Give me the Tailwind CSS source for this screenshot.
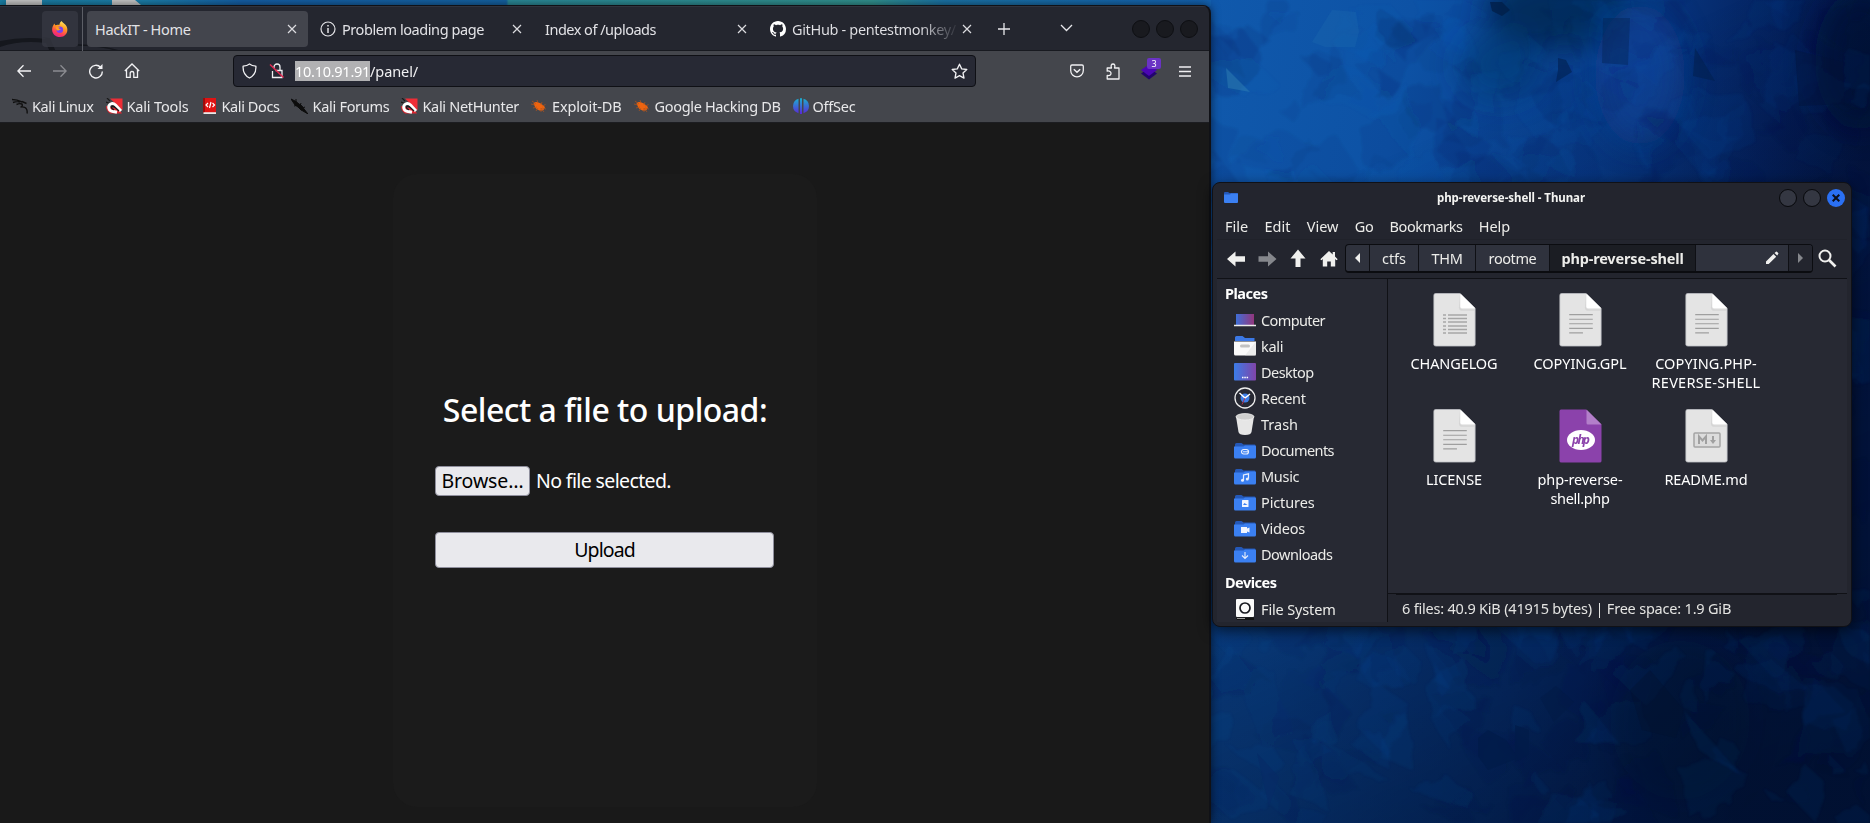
<!DOCTYPE html>
<html lang="en">
<head>
<meta charset="utf-8">
<title>Desktop</title>
<script src="https://cdn.jsdelivr.net/npm/@tailwindcss/browser@4"></script>
</head>
<body class="w-[1870px] h-[823px] overflow-hidden relative bg-[#06306f] font-['Noto_Sans',sans-serif] text-[14.5px] leading-5 whitespace-nowrap">

<!-- symbols shared by several places -->
<svg class="absolute w-0 h-0" aria-hidden="true">
  <symbol id="close" viewBox="0 0 10 10"><path d="M1 1l8 8M9 1l-8 8" stroke="#dcdce0" stroke-width="1.2" fill="none"/></symbol>
  <symbol id="magnet" viewBox="0 0 17 16"><path d="M4 .5h12.500v12z" fill="#ee2d36"/><path d="M1 0l3 3M0 4l5 2" stroke="#1a1a1a" stroke-width="1.200"/><path d="M0 8q0 5 4 7.500h12L13 11z" fill="#df2630"/><path d="M15 13L9.500 7C7 4.500 3.500 5.500 2.800 8.200S4 13 6 13.200l5 1" fill="none" stroke="#fff" stroke-width="3"/><path d="M13 13L9 9.200C7.500 7.800 5.500 8 5.500 9.500s1.500 1.800 2.500 2.200" fill="none" stroke="#1b1b1f" stroke-width="1.300"/></symbol>
  <symbol id="bug" viewBox="0 0 16 14"><path d="M2.500 4.500c2-2 4-1.500 5.500-.8 2 .8 3 1.300 4 2.800l2 1.500-1.500 3c-3 1.500-6 0-8-2z" fill="#ee6410"/><path d="M0 5l4 1M1 2l4 3M6 1l1 3M11 3l-1 3M14.500 5.500l-3 1.500M15 10l-4-1M2 9l4-1M5 12l2-3M10 13V9M13 13l-3-4" stroke="#b4541b" stroke-width=".7" fill="none"/></symbol>
  <symbol id="folder" viewBox="0 0 22 17"><path d="M1 2.500Q1 1 2.500 1h5l2 1.500H20.500q1 0 1 1V8H1z" fill="#2458b8"/><path d="M0 4.500h9.500l1.500-1H21q1 0 1 1V15q0 1.500-1.500 1.500H1.500Q0 16.500 0 15z" fill="#3b80f2"/></symbol>
  <symbol id="sheet" viewBox="0 0 43 55"><path d="M2 .5H27L42.500 15.500V52.500q0 1.500-2 1.500H2.500q-2 0-2-1.500V2.500Q.5 .5 2 .5z" fill="#e4e4e4" stroke="#bfc0c6" stroke-width=".8"/><path d="M27 1v12.500q0 3 3 3H42V18H28q-2-1-2-3z" fill="#cfcfcf" opacity=".7"/><path d="M27.500 .5L42.500 15.500H29q-1.500 0-1.500-1.500z" fill="#fff"/></symbol>
  <symbol id="lines" viewBox="0 0 43 55"><path d="M10 22h24M10 26.700h24M10 31.400h24M10 36h24M10 40.600h14" stroke="#9f9f9f" stroke-width="1.100"/></symbol>
</svg>

<!-- wallpaper -->
<svg class="absolute inset-0" width="1870" height="823" viewBox="0 0 1870 823">
  <defs>
    <linearGradient id="base" x1="1210" y1="0" x2="1870" y2="120" gradientUnits="userSpaceOnUse">
      <stop offset="0" stop-color="#1059ac"/><stop offset=".3" stop-color="#0d52a5"/><stop offset=".62" stop-color="#083a86"/><stop offset=".85" stop-color="#04205c"/><stop offset="1" stop-color="#031440"/>
    </linearGradient>
    <linearGradient id="shade" x1="1400" y1="150" x2="1700" y2="823" gradientUnits="userSpaceOnUse">
      <stop offset="0" stop-color="#020e2a" stop-opacity="0"/><stop offset=".6" stop-color="#021233" stop-opacity=".5"/><stop offset="1" stop-color="#01102c" stop-opacity=".72"/>
    </linearGradient>
    <linearGradient id="strip" x1="0" x2="1211" y1="0" y2="0" gradientUnits="userSpaceOnUse">
      <stop offset="0" stop-color="#1a7fa6"/><stop offset=".12" stop-color="#1c80ac"/><stop offset=".2" stop-color="#1560a8"/><stop offset=".418" stop-color="#1563a4"/><stop offset=".42" stop-color="#2b8b9a"/><stop offset=".72" stop-color="#329390"/><stop offset=".78" stop-color="#1b74a8"/><stop offset="1" stop-color="#1361b0"/>
    </linearGradient>
    <filter id="soft"><feGaussianBlur stdDeviation="14"/></filter>
    <filter id="brush" x="0" y="0" width="1870" height="823" filterUnits="userSpaceOnUse"><feTurbulence type="fractalNoise" baseFrequency=".03" numOctaves="3" seed="4" result="n"/><feDisplacementMap in="SourceGraphic" in2="n" scale="22"/><feGaussianBlur stdDeviation=".9"/></filter>
  </defs>
  <rect width="1870" height="823" fill="url(#base)"/>
  <g filter="url(#soft)">
    <ellipse cx="1560" cy="10" rx="75" ry="40" fill="#03254f" opacity=".8"/>
    <ellipse cx="1500" cy="65" rx="40" ry="35" fill="#06376e" opacity=".6"/>
    <ellipse cx="1640" cy="75" rx="45" ry="70" fill="#0b469c" opacity=".7"/>
    <ellipse cx="1860" cy="60" rx="45" ry="70" fill="#020e33" opacity=".7"/>
    <ellipse cx="1680" cy="720" rx="70" ry="80" fill="#02102c" opacity=".45"/>
  </g>
  <rect width="1870" height="823" fill="url(#shade)"/>
  <g id="shards" filter="url(#brush)"></g>
  <g>
    <path d="M1312 42l20-32 24 2 3 20-4 15h-30z" fill="#1d6bb0" opacity=".35"/>
    <path d="M1226 68l24 24-22-4z" fill="#3080b4" opacity=".5"/>
    <path d="M1490 2l12 0 8 8-8 6-10-5z" fill="#021d45" opacity=".7"/>
    <path d="M1603 18h27l-2 47-26-2z" fill="#022050" opacity=".4"/>
    <path d="M1558 58l8 2 6 12-16 10 2-12z" fill="#022357" opacity=".7"/>
    <path d="M1695 48l20 33-22-5z" fill="#022050" opacity=".6"/>
    <path d="M1795 50l48 12 2 42-46 2z" fill="#021238" opacity=".4"/>
    <path d="M1478 738l10-8 18 10 12 18-30 12-10-14z" fill="#021b48" opacity=".7"/>
    <path d="M1515 725l14 5v24l-14 8z" fill="#021b48" opacity=".7"/>
    <path d="M1540 698l16-12 18 16-20 20z" fill="#021a44" opacity=".4"/>
    <path d="M1630 690l20-20 34 40-8 28-34-8z" fill="#02122f" opacity=".35"/>
    <path d="M1257 753l22 24-10 30z" fill="#072a66" opacity=".6"/>
  </g>
  <rect width="1211" height="6" fill="url(#strip)"/>
  <path d="M6 0h36v5H6zM112 0h23l6 5h-29z" fill="#c9c9c9"/>
</svg>

<!-- browser window -->
<div class="absolute left-0 top-[5px] w-[1211px] h-[818px] bg-[#24262f] rounded-tr-lg border-t border-r-2 border-[#101116] shadow-[0_0_10px_rgba(0,0,0,0.6)] flex flex-col overflow-hidden">
  <svg class="absolute left-0 top-0" width="120" height="46" viewBox="0 0 120 46"><path d="M0 35Q24 30 46 33L42 31 50 32 56 46H50L46 37Q20 34 0 41z" fill="#15171d"/><path d="M78 39q22 0 41 6" fill="none" stroke="#15171d" stroke-width="1.500"/></svg>
  <!-- tab strip -->
  <div class="relative h-[45px] shrink-0 flex items-center text-[#e2e2e6] border-b border-[#181a20] border-t border-t-[#30323c]">
    <div class="ml-[42px] w-9 h-9 rounded bg-[#363842]/80 flex items-center justify-center">
      <svg width="16" height="16" viewBox="0 0 16 16"><defs><linearGradient id="ff" x1="12" y1="0" x2="5" y2="16" gradientUnits="userSpaceOnUse"><stop stop-color="#fff36b"/><stop offset=".4" stop-color="#ff9a1f"/><stop offset=".75" stop-color="#ff3f55"/><stop offset="1" stop-color="#e32090"/></linearGradient></defs><path d="M9.500 0c1 2 4 3 5 5.200C17 10 14 16 8 16 3 16-.5 12 .2 7.500.5 5.500 1.500 3.500 2.500 2.500c.2 1 .6 1.300 1 1.700C4.500 3.500 6 3.500 7.300 4 7.600 2.200 8.500.8 9.500 0z" fill="url(#ff)"/><circle cx="7.800" cy="8.700" r="3.300" fill="#7a3ff0"/><path d="M3.500 6.500c1.500-1 3-.5 4.500 0L6.500 8l3 .3c-2 .2-2 1.500-4 1.200C4.500 9 4 7.500 3.500 6.500z" fill="#ffa31a"/></svg>
    </div>
    <div class="ml-1 w-px h-[44px] bg-[#5c5e66]"></div>
    <div class="ml-1 w-[221px] h-9 rounded bg-[#43454d] flex items-center justify-between pl-[8px] pr-[11px]"><span class="tracking-[-0.35px]">HackIT - Home</span><svg width="10" height="10"><use href="#close"/></svg></div>
    <div class="w-[225px] h-9 flex items-center pl-3 pr-[11px]">
      <svg class="mr-[6px]" width="16" height="16" viewBox="0 0 16 16" fill="none" stroke="#e2e2e6" stroke-width="1.200"><circle cx="8" cy="8" r="7"/><path d="M8 7v5M8 4v1.600" stroke-width="1.500"/></svg>
      <span class="tracking-[-0.43px]">Problem loading page</span><svg class="ml-auto" width="10" height="10"><use href="#close"/></svg>
    </div>
    <div class="w-[225px] h-9 flex items-center justify-between pl-[12px] pr-[11px]"><span class="tracking-[-0.5px]">Index of /uploads</span><svg width="10" height="10"><use href="#close"/></svg></div>
    <div class="w-[225px] h-9 flex items-center pl-3 pr-[11px]">
      <svg class="mr-[6px] shrink-0" width="16" height="16" viewBox="0 0 16 16"><path fill="#fff" d="M8 0C3.580 0 0 3.580 0 8c0 3.540 2.290 6.530 5.470 7.590.4.070.55-.17.55-.38 0-.19-.01-.82-.01-1.490-2.010.37-2.530-.49-2.690-.94-.09-.23-.48-.94-.82-1.130-.28-.15-.68-.52-.01-.53.63-.01 1.080.58 1.230.82.72 1.210 1.870.87 2.330.66.07-.52.28-.87.51-1.070-1.780-.2-3.640-.89-3.640-3.950 0-.87.31-1.590.82-2.150-.08-.2-.36-1.020.08-2.120 0 0 .67-.21 2.200.82.64-.18 1.320-.27 2-.27s1.360.09 2 .27c1.530-1.040 2.200-.82 2.200-.82.44 1.100.16 1.920.08 2.120.51.56.82 1.270.82 2.150 0 3.070-1.870 3.750-3.650 3.950.29.25.54.73.54 1.480 0 1.070-.01 1.930-.01 2.200 0 .21.15.46.55.38A8.010 8.010 0 0 0 16 8c0-4.420-3.580-8-8-8z"/></svg>
      <span class="tracking-[-0.34px] bg-linear-to-r from-[#e2e2e6] from-[78%] to-[#34363f] to-[100%] bg-clip-text text-transparent">GitHub - pentestmonkey/</span><svg class="ml-auto shrink-0" width="10" height="10"><use href="#close"/></svg>
    </div>
    <svg class="ml-[15px]" width="12" height="12" viewBox="0 0 12 12"><path d="M6 0v12M0 6h12" stroke="#e8e8ec" stroke-width="1.300"/></svg>
    <svg class="ml-[50px] mb-0.5" width="13" height="8" viewBox="0 0 13 8"><path d="M1 1l5.500 5.500L12 1" fill="none" stroke="#e8e8ec" stroke-width="1.300"/></svg>
    <div class="ml-[59px] flex gap-[6px]"><i class="size-[18px] rounded-full bg-[#191a1f] border border-[#0e0f13]"></i><i class="size-[18px] rounded-full bg-[#191a1f] border border-[#0e0f13]"></i><i class="size-[18px] rounded-full bg-[#191a1f] border border-[#0e0f13]"></i></div>
  </div>
  <!-- navigation bar -->
  <div class="relative h-[40px] shrink-0 bg-[#44464c] flex items-center text-[#f0f0f2]">
    <svg class="ml-[17px]" width="15" height="14" viewBox="0 0 15 14" fill="none" stroke="#f2f2f4" stroke-width="1.300"><path d="M14 7H1M6.500 1.300L.9 7l5.600 5.700"/></svg>
    <svg class="ml-[20px]" width="15" height="14" viewBox="0 0 15 14" fill="none" stroke="#8b8c91" stroke-width="1.300"><path d="M1 7h13M8.500 1.300L14.100 7l-5.600 5.700"/></svg>
    <svg class="ml-[21px]" width="16" height="16" viewBox="0 0 16 16" fill="none" stroke="#f2f2f4" stroke-width="1.400"><path d="M12.500 4.200A6.300 6.300 0 1 0 14.300 8.500"/><path d="M14.500 1v5h-5z" fill="#f2f2f4" stroke="none"/></svg>
    <svg class="ml-[20px]" width="16" height="16" viewBox="0 0 16 16" fill="none" stroke="#f2f2f4" stroke-width="1.300"><path d="M.8 8L8 1l7.200 7M2.500 6.500V14.300h3.700V10q0-1.500 1.800-1.500T9.800 10v4.300h3.700V6.500"/></svg>
    <div class="ml-[93px] w-[743px] h-8 rounded border border-[#0f1015] bg-[#272934] flex items-center pl-[8px] pr-[7px]">
      <svg width="15" height="16" viewBox="0 0 15 16" fill="none" stroke="#f0f0f2" stroke-width="1.300" stroke-linejoin="round"><path d="M7.500 1Q9.800 2.900 13.900 3.200C14.200 8.500 12.400 12.700 7.500 15 2.600 12.700.8 8.500 1.100 3.200 5.200 2.900 7.500 1 7.500 1z"/></svg>
      <svg class="ml-3" width="16" height="16" viewBox="0 0 16 16" fill="none" stroke="#f0f0f2" stroke-width="1.300"><path d="M6.500 7.500h6.500v7H3.500V8M5 5V4a3 3 0 0 1 6 0v3.500"/><path d="M1 1.500l13.500 13" stroke="#e22850" stroke-width="1.500"/></svg>
      <span class="ml-[10px] bg-[#b1b1b3] text-white tracking-[-0.27px]">10.10.91.91</span><span class="tracking-[-0.1px]">/panel/</span>
      <svg class="ml-auto" width="17" height="17" viewBox="0 0 17 17" fill="none" stroke="#f0f0f2" stroke-width="1.300" stroke-linejoin="round"><path d="M8.500 1.200l2.200 4.700 5.100.6-3.800 3.500 1 5.100-4.500-2.500L4 15.100 5 10 1.200 6.500l5.100-.6z"/></svg>
    </div>
    <svg class="ml-[94px]" width="14" height="14" viewBox="0 0 14 14" fill="none" stroke="#f0f0f2" stroke-width="1.300"><path d="M2 1h10q1.300 0 1.300 1.200V6.500a6.300 6.300 0 0 1-12.600 0V2.200Q.7 1 2 1z"/><path d="M3.800 5.200L7 8.200l3.200-3" stroke-width="1.500"/></svg>
    <svg class="ml-[22px]" width="14" height="17" viewBox="0 0 14 17" fill="none" stroke="#f0f0f2" stroke-width="1.300" stroke-linejoin="round"><path d="M1.200 8V5h4.300C4.500 2.500 5.500 1 7 1s2.500 1.500 1.500 4H13v11H1.200v-3.500C4.500 13 5 11.700 5 10.300S3.500 7.500 1.200 8z"/></svg>
    <div class="relative ml-[21px] w-4 h-4">
      <svg class="absolute left-0 top-0" width="16" height="17" viewBox="0 0 16 17"><path d="M0 10.500L8 5l8 5.500L8 16.500z" fill="#22056e"/><path d="M0 7L8 1.500 16 7l-8 6z" fill="#4b06b4"/></svg>
      <span class="absolute left-[6px] -top-[5px] w-[14px] h-[11px] rounded-[2px] bg-[#6a33c4] text-white text-[9px] leading-[11px] text-center">3</span>
    </div>
    <svg class="ml-[22px]" width="12" height="11" viewBox="0 0 12 11"><path d="M0 1h12M0 5.500h12M0 10h12" stroke="#f0f0f2" stroke-width="1.400"/></svg>
  </div>
  <!-- bookmarks -->
  <div class="relative h-[32px] shrink-0 bg-[#44464c] border-b border-[#1c1d21] flex items-center pl-3 pb-px text-[#e8e8ea]">
    <svg class="w-4 mr-[4px]" height="16" viewBox="0 0 16 16" fill="none" stroke="#101010"><path d="M0 1.500q5 0 10 2.500M1 4.500q4-1.500 7-.5M10 3.500l4.500 2M4.500 6.500q3-1.500 5.500-.5 1 2.500-1.500 3 5-.5 6 2 1 2 .5 4.500" stroke-width="1.400"/></svg><span class="tracking-[-0.38px]">Kali Linux</span>
    <svg class="ml-3 w-[17px] mr-[4px]" height="16"><use href="#magnet"/></svg><span class="tracking-[-0.16px]">Kali Tools</span>
    <svg class="ml-[14px] w-[13px] mr-[6px]" height="16" viewBox="0 0 13 16"><path d="M0 0h13v15H0z" fill="#e01313"/><path d="M0 0h2v15H0z" fill="#9d0c0c"/><path d="M.5 14.200H13V16H.5z" fill="#e8e8e8"/><path d="M5 5L3 7l2 2M9.500 5l2 2-2 2M8 4L6.500 10" fill="none" stroke="#fff" stroke-width="1.200"/></svg><span class="tracking-[-0.41px]">Kali Docs</span>
    <svg class="ml-3 w-[17px] mr-[4px]" height="16" viewBox="0 0 17 16"><path d="M0 1l5 2.500 3 2.500 3 2 2 3 4 5-5-3-2-1-3-3-3-2-2-3z" fill="#0c0c0c" stroke="#0c0c0c" stroke-width="1"/><path d="M5 1v3M3 8l4-1M10 5l-1 3M14 9l-2 1" stroke="#0c0c0c"/></svg><span class="tracking-[-0.29px]">Kali Forums</span>
    <svg class="ml-3 w-[17px] mr-[4px]" height="16"><use href="#magnet"/></svg><span class="tracking-[-0.31px]">Kali NetHunter</span>
    <svg class="ml-3 w-4 mr-[5px]" height="14"><use href="#bug"/></svg><span class="tracking-[-0.12px]">Exploit-DB</span>
    <svg class="ml-3 w-4 mr-[5px]" height="14"><use href="#bug"/></svg><span class="tracking-[-0.34px]">Google Hacking DB</span>
    <svg class="ml-3 w-4 mr-[4px]" height="16" viewBox="0 0 16 16"><defs><linearGradient id="os" x2="0" y2="1"><stop stop-color="#1ab1cf"/><stop offset="1" stop-color="#5a27d8"/></linearGradient></defs><path d="M5.500 .8v14.400Q0 13.500 0 8T5.500 .8zM7 .2h2V16H7zM10.500 .8Q16 2.500 16 8t-5.500 7.200z" fill="url(#os)"/></svg><span class="tracking-[-0.23px]">OffSec</span>
  </div>
  <!-- upload page -->
  <div class="relative flex-1 bg-[#191919] pt-[51px]">
    <div class="ml-[393px] w-[424px] h-[633px] rounded-[24px] bg-[#1b1b1b] px-[42px] pt-[214px] text-[19.5px]">
      <h1 class="text-center text-white font-medium text-[32px] leading-[44px] tracking-[-0.5px]">Select a file to upload:</h1>
      <div class="mt-[34px] flex items-center text-white"><span class="w-[95px] h-[30px] rounded-[4px] bg-[#e9e9ed] border border-[#8f8f9d] text-black leading-[28px] text-center tracking-[-0.12px]">Browse…</span><span class="ml-[6px] tracking-[-0.62px]">No file selected.</span></div>
      <div class="mt-9 h-9 w-[339px] rounded-[4px] bg-[#e9e9ed] border border-[#8f8f9d] text-black leading-[34px] text-center tracking-[-0.9px]">Upload</div>
    </div>
  </div>
</div>

<!-- file manager window -->
<div class="absolute left-[1212px] top-[182px] w-[640px] h-[445px] rounded-lg bg-[#23252e] border border-[#101116] shadow-[0_4px_14px_rgba(0,0,0,0.6)] flex flex-col text-[#ecece9] overflow-hidden">
  <div class="h-[30px] shrink-0 relative flex items-center justify-center text-[11.5px] font-bold text-[#f4f4f2]">
    <svg class="absolute left-[11px] top-[9px]" width="14" height="11" viewBox="0 0 14 11"><path d="M0 1q0-1 1-1h3l1.500 1H13q1 0 1 1v3H0z" fill="#2458b8"/><path d="M0 2.500h6L7 1.500h7V10q0 1-1 1H1q-1 0-1-1z" fill="#3b80f2"/></svg>
    <span class="-ml-[42px] tracking-[-0.07px]">php-reverse-shell - Thunar</span>
    <div class="absolute right-[6px] top-[6px] flex gap-[6px]"><i class="size-[18px] rounded-full bg-[#343742] border border-[#08090c]"></i><i class="size-[18px] rounded-full bg-[#343742] border border-[#08090c]"></i><i class="size-[18px] rounded-full bg-[#2a70f4] flex items-center justify-center"><svg width="8" height="8" viewBox="0 0 8 8"><path d="M.7 .7l6.600 6.600M7.300 .7L.7 7.300" stroke="#0b0f1c" stroke-width="2"/></svg></i></div>
  </div>
  <div class="h-[26px] shrink-0 flex items-center pl-[12px] gap-[16.3px]">
    <span>File</span><span>Edit</span><span>View</span><span class="tracking-[-0.4px]">Go</span><span class="tracking-[-0.46px]">Bookmarks</span><span class="tracking-[-0.1px]">Help</span>
  </div>
  <div class="mx-1 h-[40px] shrink-0 flex items-center pl-[10px] pb-px border-t border-b border-t-[#20222a] border-b-[#101116]">
    <svg width="19" height="16" viewBox="0 0 19 16"><path d="M0 8l8.500-7.500V5.200H18v5.600H8.500v4.700z" fill="#f0f0ee"/></svg>
    <svg class="ml-3" width="19" height="16" viewBox="0 0 19 16"><path d="M18.500 8L10 .5V5.200H.5v5.600H10v4.700z" fill="#85878c"/></svg>
    <svg class="ml-[13px]" width="16" height="19" viewBox="0 0 16 19"><path d="M8 .5l7.500 9h-5V18h-5V9.500h-5z" fill="#f0f0ee"/></svg>
    <svg class="ml-[14px]" width="18" height="17" viewBox="0 0 18 17"><path d="M9 1L.3 9.200l1.200 1L2.800 9v7.500h4.400v-5h3.600v5h4.400V9l1.300 1.200 1.200-1-2.700-2.600V2h-2.300v2.500z" fill="#f0f0ee"/></svg>
    <div class="ml-[7px] flex h-[29px] w-[468px] rounded-[4px] border border-[#0b0c10] bg-[#2f323d] overflow-hidden border-b-2 leading-[26px] text-center">
      <span class="w-[24px] shrink-0 border-r border-[#0f1015] flex items-center justify-center"><svg width="5" height="10" viewBox="0 0 5 10"><path d="M5 0v10L0 5z" fill="#f0f0ee"/></svg></span>
      <span class="w-[49px] shrink-0 border-r border-[#0f1015]">ctfs</span>
      <span class="w-[57px] shrink-0 border-r border-[#0f1015] tracking-[-0.3px]">THM</span>
      <span class="w-[73px] shrink-0 tracking-[-0.4px]">rootme</span>
      <span class="w-[147px] shrink-0 bg-[#1b1d23] border-x border-[#0f1015] font-bold tracking-[-0.16px]">php-reverse-shell</span>
      <span class="w-[92px] shrink-0 flex items-center justify-end pr-[9px]"><svg width="14" height="14" viewBox="0 0 14 14"><path d="M1 10.500L8.500 3l2.700 2.700L3.700 13H1zM9.500 2L11 .8q.6-.4 1.200.1l1 1q.5.6 0 1.200L12.200 4.600z" fill="#f0f0ee"/></svg></span>
      <span class="flex-1 bg-[#23252e] border-l border-[#0f1015] flex items-center justify-center"><svg width="5" height="10" viewBox="0 0 5 10"><path d="M0 0v10l5-5z" fill="#85878c"/></svg></span>
    </div>
    <svg class="ml-[5px]" width="19" height="19" viewBox="0 0 19 19" fill="none" stroke="#f0f0ee"><circle cx="7" cy="7" r="5.500" stroke-width="2"/><path d="M11 11l6.500 6.500" stroke-width="2.600"/></svg>
  </div>
  <div class="mx-1 mb-1 flex-1 min-h-0 flex">
    <!-- places -->
    <div class="w-[171px] shrink-0 bg-[#272933] border-r border-[#101116] pt-[3px] flex flex-col overflow-hidden">
      <div class="h-[22px] shrink-0 pl-[8px] leading-[22px] font-bold text-white tracking-[-0.5px]">Places</div>
      <div class="mt-[3px] flex flex-col pl-[17px] *:h-[26px] *:flex *:items-center *:gap-[5px] *:shrink-0">
        <div><svg width="22" height="20" viewBox="0 0 22 20"><defs><linearGradient id="g1"><stop stop-color="#3f6fd8"/><stop offset="1" stop-color="#93367c"/></linearGradient></defs><path d="M2 4h18v11H2z" fill="url(#g1)"/><path d="M0 15.500h22" stroke="#ececec" stroke-width="1.500"/></svg><span class="tracking-[-0.6px]">Computer</span></div>
        <div><svg width="22" height="20" viewBox="0 0 22 20"><path d="M1 1.500Q1 0 2.500 0h6L11 2h9.500v3H1z" fill="#3b78e6"/><path d="M0 5.500h22V18q0 1.500-1.500 1.500h-19Q0 19.500 0 18z" fill="#fafafa"/><path d="M22 5.500v14H11z" fill="#ddd" opacity=".5"/><rect x="6" y="8.500" width="10" height="3" rx="1.500" fill="#c2c2c2"/></svg><span class="tracking-[-0.3px]">kali</span></div>
        <div><svg width="22" height="18" viewBox="0 0 22 18"><defs><linearGradient id="g2"><stop stop-color="#3b7ce8"/><stop offset="1" stop-color="#8044a8"/></linearGradient></defs><rect width="22" height="17.500" rx="1" fill="url(#g2)"/><path d="M8 14.500h1.500M10.300 14.500h1.500M12.600 14.500h1.500" stroke="#fff" stroke-width="1.500"/></svg><span class="tracking-[-0.55px]">Desktop</span></div>
        <div><svg width="22" height="22" viewBox="0 0 22 22"><circle cx="11" cy="11" r="10" fill="none" stroke="#ececec" stroke-width="1.300"/><circle cx="11" cy="11" r="4.500" fill="#3d7ee8"/><path d="M5.500 6l5.500 5 5-4" fill="none" stroke="#fff" stroke-width="1.400"/><path d="M11 11l-3 6.500" stroke="#b03050" stroke-width="1"/></svg><span class="tracking-[-0.32px]">Recent</span></div>
        <div><svg width="22" height="22" viewBox="0 0 22 22"><path d="M2 3.500h18L17.500 19q-.5 3-6.500 3t-6.500-3z" fill="#e6e6e6"/><ellipse cx="11" cy="3.800" rx="9" ry="3.200" fill="#cfcfcf" stroke="#efefef" stroke-width=".8"/></svg><span>Trash</span></div>
        <div><svg width="22" height="17" viewBox="0 0 22 17"><use href="#folder"/><rect x="7.500" y="7.500" width="7" height="4.500" rx="2.200" fill="none" stroke="#e8eefc" stroke-width="1.200"/><path d="M9 9.800h5" stroke="#e8eefc"/></svg><span class="tracking-[-0.58px]">Documents</span></div>
        <div><svg width="22" height="17" viewBox="0 0 22 17"><use href="#folder"/><path d="M9.500 12V7l5-1.200v5" fill="none" stroke="#e8eefc" stroke-width="1.200"/><circle cx="8.500" cy="12.300" r="1.500" fill="#e8eefc"/><circle cx="13.300" cy="11" r="1.500" fill="#e8eefc"/></svg><span class="tracking-[-0.3px]">Music</span></div>
        <div><svg width="22" height="17" viewBox="0 0 22 17"><use href="#folder"/><rect x="8" y="6" width="6.500" height="7" rx=".6" fill="#f2f6ff"/><path d="M9 11l1.500-2 1.500 1 1.500 1z" fill="#3b80f2"/></svg><span class="tracking-[-0.12px]">Pictures</span></div>
        <div><svg width="22" height="17" viewBox="0 0 22 17"><use href="#folder"/><path d="M7 7h6v1.500l2.500-1v5l-2.500-1V13H7z" fill="#f2f6ff"/></svg><span class="tracking-[-0.2px]">Videos</span></div>
        <div><svg width="22" height="17" viewBox="0 0 22 17"><use href="#folder"/><path d="M11 6v6.500M8 9.500l3 3 3-3" fill="none" stroke="#e8eefc" stroke-width="1.100"/></svg><span class="tracking-[-0.5px]">Downloads</span></div>
      </div>
      <div class="mt-[4px] h-[22px] shrink-0 pl-[8px] leading-[22px] font-bold text-white tracking-[-0.5px]">Devices</div>
      <div class="mt-[3px] h-[26px] shrink-0 pl-[17px] flex items-center gap-[5px]"><svg width="22" height="22" viewBox="0 0 22 22"><rect x="2" y="1" width="18" height="18" rx="1" fill="#fafafa"/><circle cx="11" cy="10" r="5" fill="none" stroke="#17191f" stroke-width="1.700"/><path d="M2 19.500h18V22H3z" fill="#111"/><path d="M3 20.500h8" stroke="#999"/></svg><span class="tracking-[-0.15px]">File System</span></div>
    </div>
    <!-- files -->
    <div class="flex-1 flex flex-col">
      <div class="flex-1 bg-[#272933] border-b border-[#101116] pl-[3px] pt-[14px] grid grid-cols-[repeat(3,126px)] grid-rows-[116px_116px] content-start text-center leading-[19px] text-white *:flex *:flex-col *:items-center">
        <div><svg class="mb-[7px]" width="43" height="54"><use href="#sheet"/><path d="M10 22h3M10 25.500h3M10 29h3M10 33h3M10 36.500h3M10 40h3M15 22h19M15 25.500h19M15 29h19M15 33h19M15 36.500h19M15 40h19" stroke="#a6a6a6" stroke-width="1.400"/></svg><span class="tracking-[-0.1px]">CHANGELOG</span></div>
        <div><svg class="mb-[7px]" width="43" height="54"><use href="#sheet"/><use href="#lines"/></svg><span class="tracking-[-0.07px]">COPYING.GPL</span></div>
        <div><svg class="mb-[7px]" width="43" height="54"><use href="#sheet"/><use href="#lines"/></svg><span class="tracking-[0.1px]">COPYING.PHP-</span><span class="tracking-[0.26px]">REVERSE-SHELL</span></div>
        <div><svg class="mb-[7px]" width="43" height="54"><use href="#sheet"/><use href="#lines"/></svg><span class="tracking-[-0.12px]">LICENSE</span></div>
        <div><svg class="mb-[7px]" width="43" height="54" viewBox="0 0 43 54"><path d="M2 .5H27L42.500 15.500V52q0 1.500-2 1.500H2.500Q.5 53.500 .5 52V2.500Q.5 .5 2 .5z" fill="#8b42ab"/><path d="M27.500 .5L42.500 15.500H29q-1.500 0-1.500-1.500z" fill="#b37fca"/><ellipse cx="22" cy="31" rx="14" ry="10" fill="#fff"/><text x="22" y="34.500" text-anchor="middle" textLength="18" font-size="12" font-weight="bold" font-style="italic" font-family="Noto Sans, sans-serif" fill="#8b42ab">php</text></svg><span class="tracking-[-0.12px]">php-reverse-</span><span class="tracking-[-0.36px]">shell.php</span></div>
        <div><svg class="mb-[7px]" width="43" height="54"><use href="#sheet"/><rect x="9" y="24" width="26" height="14" rx="1" fill="#dcdcdc" stroke="#a4a4a4" stroke-width="1.500"/><path d="M14 35v-7.500l3.500 4 3.500-4V35M28 27v5" fill="none" stroke="#a0a0a0" stroke-width="2"/><path d="M25 31h6l-3 4z" fill="#a0a0a0"/></svg><span class="tracking-[-0.17px]">README.md</span></div>
      </div>
      <div class="h-[28px] ml-2 mr-[10px] pl-[6px] pb-[2px] border-t border-[#101116] flex items-center text-[#e4e4e2] tracking-[-0.2px]">6 files: 40.9 KiB (41915 bytes) | Free space: 1.9 GiB</div>
    </div>
  </div>
</div>
<script>
  // painterly facets of the wallpaper
  let seed = 11;
  const rnd = () => (seed = (seed * 16807) % 2147483647) / 2147483647;
  let out = '';
  for (let i = 0; i < 600; i++) {
    const x = 1205 + rnd() * 670, y = rnd() * 823, r = 10 + rnd() * 38, n = 3 + Math.floor(rnd() * 4), a0 = rnd() * 6;
    const p = [];
    for (let k = 0; k < n; k++) { const a = a0 + (k + rnd() * 0.6) / n * 6.283, q = r * (0.3 + rnd() * 0.9); p.push((x + Math.cos(a) * q).toFixed(1) + ',' + (y + Math.sin(a) * q).toFixed(1)); }
    const light = rnd() < 0.5;
    out += `<polygon points="${p.join(' ')}" fill="${light ? '#1c6ac4' : '#011a48'}" opacity="${(light ? 0.03 + rnd() * 0.05 : 0.03 + rnd() * 0.08).toFixed(2)}"/>`;
  }
  document.getElementById('shards').innerHTML = out;
</script>
</body>
</html>
